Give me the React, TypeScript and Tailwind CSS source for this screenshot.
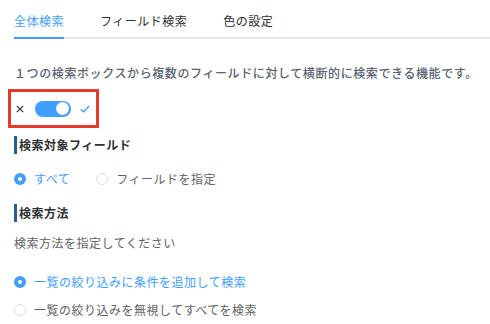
import React from "react";

const font = "font-['Noto_Sans_CJK_JP','Noto_Sans',sans-serif]";

const Radio = ({ checked, label }: { checked?: boolean; label: string }) => (
  <label className="flex items-center gap-[8px] h-[20px]">
    {checked ? (
      <span className="w-[12px] h-[12px] rounded-full bg-[#409eff] flex items-center justify-center">
        <span className="w-[4px] h-[4px] rounded-full bg-white" />
      </span>
    ) : (
      <span className="w-[12px] h-[12px] rounded-full border border-[#dcdfe6] bg-white" />
    )}
    <span className={checked ? "text-[#409eff]" : "text-[#606266]"}>{label}</span>
  </label>
);

const SectionTitle = ({ children }: { children: React.ReactNode }) => (
  <div className="flex items-center gap-[2px] h-[18px]">
    <span className="w-[3px] h-[18px] bg-[#215f94]" />
    <span className="font-bold text-[#303133]">{children}</span>
  </div>
);

export default function App() {
  return (
    <div
      className={`w-[490px] h-[324px] bg-white pl-[14px] text-[12px] leading-[20px] tracking-[0.5px] overflow-hidden ${font}`}
    >
      {/* tabs */}
      <div className="flex gap-[36px] h-[39px] border-b-2 border-[#e4e7ed]">
        <div className="pt-[11px] h-[39px] -mb-[2px] border-b-2 border-[#409eff] text-[#409eff]">全体検索</div>
        <div className="pt-[11px] text-[#303133]">フィールド検索</div>
        <div className="pt-[11px] text-[#303133]">色の設定</div>
      </div>

      <p className="mt-[24px] text-[#596270] font-medium tracking-[0.6px]">
        １つの検索ボックスから複数のフィールドに対して横断的に検索できる機能です。
      </p>

      {/* switch with highlight */}
      <div className="mt-[6px] -ml-[6px] w-[91px] h-[39px] border-[3px] border-[#e5392d] flex items-center pl-[5px]">
        <svg width="8" height="8" viewBox="0 0 8 8">
          <path d="M0.8 0.8 L7.2 7.2 M7.2 0.8 L0.8 7.2" stroke="#303133" strokeWidth="1.2" />
        </svg>
        <div className="ml-[11px] w-[36px] h-[16px] rounded-full bg-[#409eff] flex items-center justify-end pr-[2px]">
          <span className="w-[13px] h-[13px] rounded-full bg-white" />
        </div>
        <svg width="10" height="8" viewBox="0 0 10 8" className="ml-[9px]">
          <path d="M0.8 4.2 L3.6 6.8 L9.2 1" stroke="#409eff" strokeWidth="1.3" fill="none" />
        </svg>
      </div>

      <div className="mt-[8px]">
        <SectionTitle>検索対象フィールド</SectionTitle>
      </div>

      <div className="mt-[15px] flex gap-[26px]">
        <Radio checked label="すべて" />
        <Radio label="フィールドを指定" />
      </div>

      <div className="mt-[15px]">
        <SectionTitle>検索方法</SectionTitle>
      </div>

      <p className="mt-[11px] text-[#606266]">検索方法を指定してください</p>

      <div className="mt-[19px]">
        <Radio checked label="一覧の絞り込みに条件を追加して検索" />
      </div>
      <div className="mt-[8px]">
        <Radio label="一覧の絞り込みを無視してすべてを検索" />
      </div>
    </div>
  );
}
